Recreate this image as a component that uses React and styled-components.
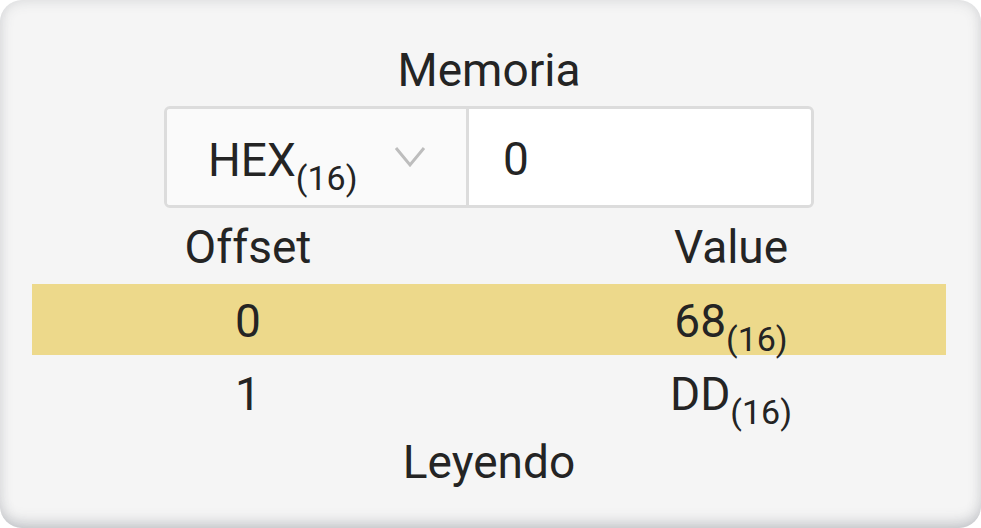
import styled, { createGlobalStyle } from "styled-components";

const GlobalStyle = createGlobalStyle`
  html, body {
    margin: 0;
    padding: 0;
    background: #ffffff;
  }
  body {
    font-family: Roboto, "Liberation Sans", sans-serif;
    font-weight: 400;
    color: #242424;
  }
`;

const Panel = styled.div`
  width: 981px;
  height: 528px;
  box-sizing: border-box;
  padding: 43px 35px 0 32px;
  border-radius: 22px;
  background: #f5f5f5;
  box-shadow: inset 0 0 14px rgba(70, 75, 90, 0.18),
    inset 0 -12px 16px -8px rgba(70, 75, 90, 0.22);
  display: flex;
  flex-direction: column;
  font-size: 46px;
  line-height: 54px;
`;

const Title = styled.div`
  text-align: center;
`;

const InputGroup = styled.div`
  margin: 9px auto 0;
  width: 650px;
  height: 102px;
  box-sizing: border-box;
  border: 3px solid #dcdcdc;
  border-radius: 6px;
  display: flex;
  overflow: hidden;
`;

const Select = styled.div`
  width: 302px;
  flex: none;
  box-sizing: border-box;
  background: #fafafa;
  border-right: 3px solid #dcdcdc;
  padding: 6px 0 0 41px;
  display: flex;
  align-items: center;
  gap: 36px;
`;

const Field = styled.div`
  flex: 1;
  background: #ffffff;
  padding: 4px 0 0 34px;
  display: flex;
  align-items: center;
`;

const Sub = styled.span`
  font-size: 34px;
  vertical-align: -0.4em;
  line-height: 0;
`;

const Table = styled.div`
  display: flex;
  flex-direction: column;
  gap: 2px;
  margin-top: 12px;
`;

const Row = styled.div`
  display: grid;
  grid-template-columns: 432px 1fr;
  height: ${(p) => (p.$head ? "62px" : "71px")};
  box-sizing: border-box;
  padding-top: ${(p) => (p.$head ? "0" : "10px")};
  background: ${(p) => (p.$active ? "#edd98b" : "transparent")};
`;

const Cell = styled.div`
  text-align: center;
  padding-left: ${(p) => (p.$value ? "52px" : "0")};
`;

const Status = styled.div`
  text-align: center;
  margin-top: 7px;
`;

const Chevron = () => (
  <svg width="32" height="22" viewBox="0 0 32 22" style={{ marginTop: -6 }}>
    <polyline
      points="2,2 16,19 30,2"
      fill="none"
      stroke="#bdbdbd"
      strokeWidth="3"
    />
  </svg>
);

const rows = [
  { offset: "0", value: "68" },
  { offset: "1", value: "DD" },
];

export default function App() {
  return (
    <>
      <GlobalStyle />
      <Panel>
        <Title>Memoria</Title>
        <InputGroup>
          <Select>
            <span>
              HEX<Sub>(16)</Sub>
            </span>
            <Chevron />
          </Select>
          <Field>0</Field>
        </InputGroup>
        <Table>
          <Row $head>
            <Cell>Offset</Cell>
            <Cell $value>Value</Cell>
          </Row>
          {rows.map((r, i) => (
            <Row key={r.offset} $active={i === 0}>
              <Cell>{r.offset}</Cell>
              <Cell $value>
                {r.value}
                <Sub>(16)</Sub>
              </Cell>
            </Row>
          ))}
        </Table>
        <Status>Leyendo</Status>
      </Panel>
    </>
  );
}
